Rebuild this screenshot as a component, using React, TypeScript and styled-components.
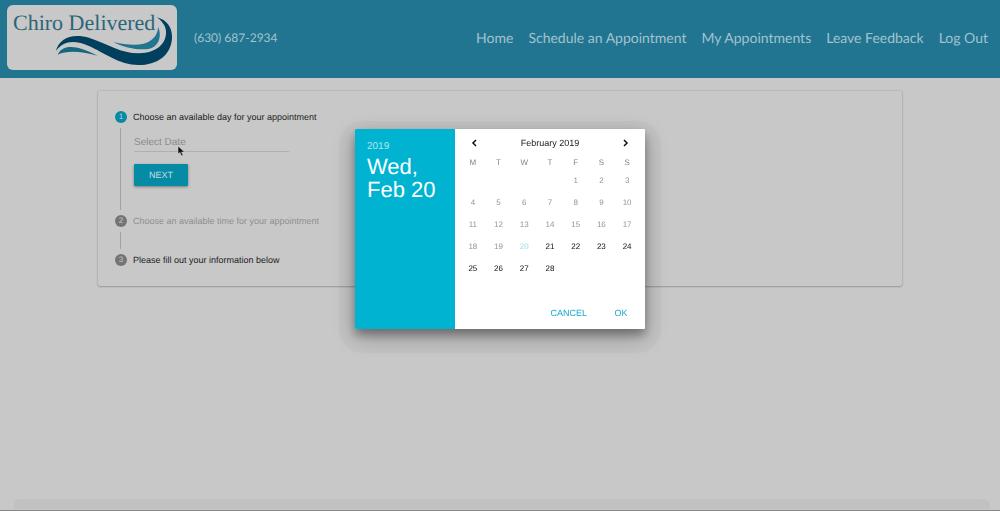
import React from "react";
import styled, { createGlobalStyle } from "styled-components";

const sans = `"Liberation Sans", Arial, Helvetica, sans-serif`;
const rounded = `Lato, "Open Sans", sans-serif`;

const GlobalStyle = createGlobalStyle`
  * { box-sizing: border-box; }
  body {
    margin: 0;
    background: #c8c8c8;
    font-family: ${sans};
    text-rendering: geometricPrecision;
  }
  button, input { font-family: inherit; text-rendering: inherit; }
`;

const Page = styled.div`
  min-height: 100vh;
  display: flex;
  flex-direction: column;
`;

const Header = styled.header`
  display: flex;
  align-items: center;
  min-height: 78px;
  padding: 0 12px 3px 7px;
  background: #217591;
  color: #a3c3ce;
  font-family: ${rounded};
`;

const Logo = styled.a`
  display: grid;
  width: 170px;
  height: 65px;
  border-radius: 6px;
  background: #c8c8c8;
  text-decoration: none;
`;

const LogoName = styled.span`
  grid-area: 1 / 1;
  padding: 5px 0 0 6px;
  color: #2a6678;
  font: 22px/26px "Liberation Serif", "Times New Roman", serif;
  white-space: nowrap;
`;

const LogoWave = styled.svg`
  grid-area: 1 / 1;
  width: 100%;
  height: 100%;
`;

const Phone = styled.span`
  margin-left: 17px;
  font-size: 12px;
  white-space: nowrap;
`;

const Nav = styled.nav`
  display: flex;
  gap: 15px;
  margin-left: auto;
`;

const NavLink = styled.a`
  color: inherit;
  font-size: 14px;
  line-height: 20px;
  text-decoration: none;
  white-space: nowrap;
`;

const Main = styled.main`
  flex: 1;
  padding: 13px 98px;
`;

const Card = styled.section`
  padding: 20px 17px;
  border-radius: 2px;
  background: #c8c8c8;
  box-shadow: 0 0 2px rgba(0, 0, 0, 0.2), 0 1px 2px rgba(0, 0, 0, 0.2);
`;

const Steps = styled.ol`
  margin: 0;
  padding: 0;
  list-style: none;
`;

const StepHead = styled.div<{ $muted?: boolean }>`
  display: flex;
  align-items: center;
  gap: 6px;
  height: 12px;
  color: ${(p) => (p.$muted ? "#8f8f8f" : "#1c1c1c")};
  font-size: 9px;
  white-space: nowrap;
`;

const StepNumber = styled.span<{ $active?: boolean }>`
  width: 12px;
  height: 12px;
  border-radius: 50%;
  background: ${(p) => (p.$active ? "#068ba4" : "#747474")};
  color: #c8c8c8;
  font-size: 8px;
  line-height: 12px;
  text-align: center;
`;

const StepBody = styled.div`
  min-height: 17px;
  margin: 5px 0 5px 5px;
  padding-left: 13px;
  border-left: 1px solid #a2a2a2;
`;

const DateForm = styled.form`
  display: flex;
  flex-direction: column;
  align-items: flex-start;
  gap: 12px;
  padding-bottom: 24px;
`;

const DateInput = styled.input`
  width: 155px;
  height: 24px;
  padding: 5px 0 0;
  border: 0;
  border-bottom: 1px solid #b0b0b0;
  background: transparent;
  font-size: 10px;
  outline: 0;
  &::placeholder { color: #8a8a8a; opacity: 1; }
`;

const NextButton = styled.button`
  width: 54px;
  height: 22px;
  padding: 0;
  border: 0;
  border-radius: 1px;
  background: #068ba4;
  color: #c8dde1;
  font-size: 9px;
  box-shadow: 0 1px 3px rgba(0, 0, 0, 0.4);
`;

const Footer = styled.footer`
  height: 12px;
  border-bottom: 1px solid #858585;
  &::before {
    content: "";
    display: block;
    height: 10px;
    margin: 0 10px 0 14px;
    border-radius: 14px 20px 0 0 / 10px;
    background: #c1c1c1;
  }
`;

const Pointer = styled.svg`
  position: absolute;
  left: 177px;
  top: 145px;
  width: 9px;
  height: 12px;
`;

const Overlay = styled.div`
  position: fixed;
  inset: 0;
  display: flex;
  justify-content: center;
  align-items: flex-start;
  padding-top: 129px;
`;

const Dialog = styled.div`
  position: relative;
  display: flex;
  width: 290px;
  border-radius: 1px;
  background: #fff;
  box-shadow: 0 7px 22px rgba(0, 0, 0, 0.26), 0 6px 10px rgba(0, 0, 0, 0.3);
  &::before {
    content: "";
    position: absolute;
    z-index: -1;
    inset: -8px -16px -24px;
    border-radius: 24px;
    background: rgba(0, 0, 0, 0.03);
  }
`;

const Chosen = styled.div`
  width: 100px;
  padding: 12px;
  border-radius: 1px 0 0 1px;
  background: #00b4d1;
  color: #fff;
`;

const Year = styled.div`
  color: #b0e6ef;
  font-size: 10px;
  line-height: 12px;
`;

const ChosenDay = styled.div`
  margin-top: 2px;
  font-size: 22px;
  line-height: 23px;
  white-space: nowrap;
`;

const ChosenLine = styled.span`
  display: block;
`;

const Calendar = styled.div`
  flex: 1;
  padding: 4px 5px;
`;

const MonthBar = styled.div`
  display: flex;
  align-items: center;
  justify-content: space-between;
  height: 20px;
  padding: 0 8px;
  color: #222;
  font-size: 9px;
`;

const Arrow = styled.button`
  display: flex;
  width: 12px;
  height: 12px;
  padding: 0;
  border: 0;
  background: none;
`;

const Days = styled.table`
  width: 100%;
  table-layout: fixed;
  border-collapse: collapse;
  font-size: 8px;
  text-align: center;
  th { height: 16px; padding: 2px 0 0; color: #858585; font-weight: 400; }
  td { height: 22px; padding: 0; }
`;

const dayColors = { past: "#959595", today: "#9bdde8", open: "#111" };

const Day = styled.button<{ $kind: keyof typeof dayColors }>`
  display: block;
  width: 100%;
  height: 22px;
  padding: 0;
  border: 0;
  background: none;
  color: ${(p) => dayColors[p.$kind]};
  font-size: 8px;
`;

const Actions = styled.div`
  display: flex;
  justify-content: flex-end;
  gap: 3px;
  margin-top: 24px;
  padding-bottom: 2px;
`;

const ActionButton = styled.button`
  min-width: 38px;
  height: 20px;
  padding: 0 12px;
  border: 0;
  background: none;
  color: #18aacb;
  font-size: 9px;
`;

const links = ["Home", "Schedule an Appointment", "My Appointments", "Leave Feedback", "Log Out"];
const weekdays = ["M", "T", "W", "T", "F", "S", "S"];
const firstColumn = 4;
const weeks = Array.from({ length: 5 }, (_, w) =>
  Array.from({ length: 7 }, (_, d) => w * 7 + d - firstColumn + 1),
);
const kindOf = (day: number) => (day < 20 ? "past" : day === 20 ? "today" : "open");

export default function App() {
  return (
    <>
      <GlobalStyle />
      <Page>
        <Header>
          <Logo href="#">
            <LogoName>Chiro Delivered</LogoName>
            <LogoWave viewBox="21 15 510 195" aria-hidden="true">
              <path
                fill="#003f5e"
                d="M167 154C178 115 215 98 269 114C325 133 365 161 418 160C468 159 500 132 498 94C497 76 484 61 470 52C501 59 518 84 516 116C512 166 471 195 416 195C357 195 311 157 267 138C224 119 190 121 167 154Z"
              />
              <path fill="#17677f" d="M173 164C188 132 229 133 293 167C240 153 203 151 173 164Z" />
              <path
                fill="#217591"
                d="M340 126C391 138 431 138 454 120C469 108 474 95 474 80C487 108 477 145 438 148C402 149 370 142 340 126Z"
              />
            </LogoWave>
          </Logo>
          <Phone>(630) 687-2934</Phone>
          <Nav>
            {links.map((text) => (
              <NavLink href="#" key={text}>{text}</NavLink>
            ))}
          </Nav>
        </Header>
        <Main>
          <Card>
            <Steps>
              <li>
                <StepHead><StepNumber $active>1</StepNumber>Choose an available day for your appointment</StepHead>
                <StepBody>
                  <DateForm onSubmit={(e) => e.preventDefault()}>
                    <DateInput aria-label="Select Date" placeholder="Select Date" />
                    <NextButton>NEXT</NextButton>
                  </DateForm>
                </StepBody>
              </li>
              <li>
                <StepHead $muted><StepNumber>2</StepNumber>Choose an available time for your appointment</StepHead>
                <StepBody />
              </li>
              <li>
                <StepHead><StepNumber>3</StepNumber>Please fill out your information below</StepHead>
              </li>
            </Steps>
          </Card>
        </Main>
        <Footer />
      </Page>
      <Overlay>
        <Dialog role="dialog" aria-label="Choose a date">
          <Chosen>
            <Year>2019</Year>
            <ChosenDay>
              <ChosenLine>Wed,</ChosenLine>
              <ChosenLine>Feb 20</ChosenLine>
            </ChosenDay>
          </Chosen>
          <Calendar>
            <MonthBar>
              <Arrow aria-label="Previous month">
                <svg width="12" height="12" viewBox="0 0 12 12" fill="none" stroke="#111" strokeWidth="1.5">
                  <path d="M8 3L5 6L8 9" />
                </svg>
              </Arrow>
              <span>February 2019</span>
              <Arrow aria-label="Next month">
                <svg width="12" height="12" viewBox="0 0 12 12" fill="none" stroke="#111" strokeWidth="1.5">
                  <path d="M4 3L7 6L4 9" />
                </svg>
              </Arrow>
            </MonthBar>
            <Days>
              <thead>
                <tr>{weekdays.map((d, i) => <th key={i}>{d}</th>)}</tr>
              </thead>
              <tbody>
                {weeks.map((week, w) => (
                  <tr key={w}>
                    {week.map((day) => (
                      <td key={day}>
                        {day > 0 && day < 29 && <Day $kind={kindOf(day)}>{day}</Day>}
                      </td>
                    ))}
                  </tr>
                ))}
              </tbody>
            </Days>
            <Actions>
              <ActionButton>CANCEL</ActionButton>
              <ActionButton>OK</ActionButton>
            </Actions>
          </Calendar>
        </Dialog>
      </Overlay>
      <Pointer viewBox="0 0 9 12" aria-hidden="true">
        <path d="M1 1V9L3 7.500L4.500 11L6 10.300L4.600 7H7.500Z" fill="#111" stroke="#ddd" strokeWidth="0.5" />
      </Pointer>
    </>
  );
}
